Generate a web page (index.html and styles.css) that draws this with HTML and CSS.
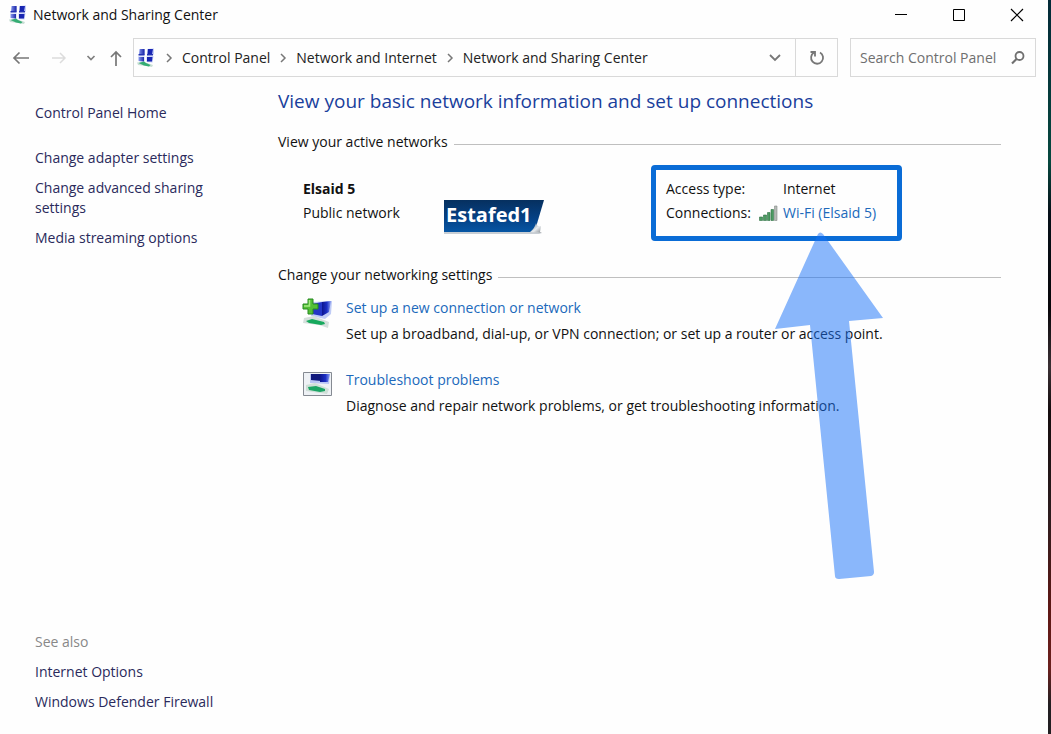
FILE: index.html
```
<!DOCTYPE html>
<html lang="en">
<head>
<meta charset="utf-8">
<title>Network and Sharing Center</title>
<link rel="stylesheet" href="styles.css">
</head>
<body>
<svg class="defs" aria-hidden="true">
  <defs>
    <linearGradient id="screen" x1="0" y1="0" x2="1" y2="0">
      <stop offset="0" stop-color="#0c1590"/><stop offset=".55" stop-color="#1c2fc4"/><stop offset="1" stop-color="#8ea2f2"/>
    </linearGradient>
    <linearGradient id="pane" x1="0" y1="0" x2="1" y2="0">
      <stop offset="0" stop-color="#8090e8"/><stop offset=".4" stop-color="#1420a4"/><stop offset="1" stop-color="#1a28b8"/>
    </linearGradient>
    <symbol id="network" viewBox="0 0 20 20">
      <path d="M3 1h6v6l-6 .5zM11 1l7-.5v6l-7 1zM2 8.500h6.500V14L2 13zM10.500 8.500l7-.5-1 6.500-6-.5z" fill="#c4cdf6"/>
      <path d="M4 1h4.500v5.500H3zM12 1h5l-1 5.500h-4.500z" fill="url(#pane)"/>
      <path d="M3 9h5v4.500l-5-.5zM11 9h5.500l-.5 4.500h-5z" fill="url(#pane)"/>
      <path d="M2.500 6h6v1.500h-6zM11 6h6v1.500h-6z" fill="#2332b4"/>
      <path d="M1 14.500l7-.5 9 3-1 2-6-1-8-1z" fill="#c9ded5"/>
      <path d="M2.500 15l5.500-1.500 2 1.500 4.500 2-1.500 1.500-5-1z" fill="#35ad74"/>
    </symbol>
    <symbol id="chevron-right" viewBox="0 0 8 10">
      <path d="M2 1l4 4-4 4" fill="none" stroke="#777" stroke-width="1.500"/>
    </symbol>
  </defs>
</svg>
<div class="desktop">
  <div class="window">
    <header class="titlebar">
      <svg class="app-icon"><use href="#network"/></svg>
      <span class="title">Network and Sharing Center</span>
      <div class="captions">
        <button class="caption" aria-label="Minimize"><svg viewBox="0 0 14 14"><path d="M1 6.500h12" stroke="#000"/></svg></button>
        <button class="caption" aria-label="Maximize"><svg viewBox="0 0 14 14"><path d="M1.500 1.500h11v11h-11z" fill="none" stroke="#000"/></svg></button>
        <button class="caption" aria-label="Close"><svg viewBox="0 0 14 14"><path d="M1 1l12 12M13 1L1 13" stroke="#000" stroke-width="1.200"/></svg></button>
      </div>
    </header>

    <nav class="toolbar" aria-label="Navigation">
      <div class="history">
        <button class="tool wide" aria-label="Back"><svg width="18" height="14" viewBox="0 0 18 14"><path d="M17 7H2M7.500 1.500L2 7l5.500 5.500" fill="none" stroke="#777" stroke-width="1.700"/></svg></button>
        <button class="tool wide" aria-label="Forward"><svg width="16" height="14" viewBox="0 0 16 14"><path d="M1 7h13M9 2l5 5-5 5" fill="none" stroke="#dcdcdc" stroke-width="1.500"/></svg></button>
        <button class="tool" aria-label="Recent locations"><svg width="10" height="8" viewBox="0 0 10 8"><path d="M1.500 2L5 5.500 8.500 2" fill="none" stroke="#808080" stroke-width="1.700"/></svg></button>
        <button class="tool" aria-label="Up"><svg width="14" height="16" viewBox="0 0 14 16"><path d="M7 16V2M2 7l5-5 5 5" fill="none" stroke="#777" stroke-width="1.700"/></svg></button>
      </div>
      <div class="address">
        <svg class="app-icon"><use href="#network"/></svg>
        <svg class="sep"><use href="#chevron-right"/></svg>
        <a class="crumb" href="#">Control Panel</a>
        <svg class="sep"><use href="#chevron-right"/></svg>
        <a class="crumb" href="#">Network and Internet</a>
        <svg class="sep"><use href="#chevron-right"/></svg>
        <a class="crumb" href="#">Network and Sharing Center</a>
        <button class="tool drop" aria-label="Previous locations"><svg width="14" height="10" viewBox="0 0 14 10"><path d="M2 2l5 5 5-5" fill="none" stroke="#777" stroke-width="1.800"/></svg></button>
        <button class="tool refresh" aria-label="Refresh"><svg width="16" height="16" viewBox="0 0 16 16"><path d="M11 2.500A6 6 0 1 1 5 2.600M1.500 2h4.500v4.500" fill="none" stroke="#777" stroke-width="1.800"/></svg></button>
      </div>
      <form class="search">
        <input class="search-input" type="text" placeholder="Search Control Panel" aria-label="Search Control Panel">
        <button class="tool" type="button" aria-label="Search"><svg width="16" height="16" viewBox="0 0 16 16"><circle cx="9.500" cy="6" r="4" fill="none" stroke="#707070" stroke-width="1.800"/><path d="M6.500 9L2 13.500" stroke="#707070" stroke-width="2.200"/></svg></button>
      </form>
    </nav>

    <div class="content">
      <aside class="sidebar">
        <a class="side-link home" href="#">Control Panel Home</a>
        <a class="side-link" href="#">Change adapter settings</a>
        <a class="side-link" href="#">Change advanced sharing settings</a>
        <a class="side-link" href="#">Media streaming options</a>
        <div class="see-also">
          <span class="muted">See also</span>
          <a class="side-link" href="#">Internet Options</a>
          <a class="side-link" href="#">Windows Defender Firewall</a>
        </div>
      </aside>

      <main class="main">
        <h1 class="heading">View your basic network information and set up connections</h1>
        <h2 class="section">View your active networks</h2>
        <div class="network">
          <div class="network-name">
            <strong>Elsaid 5</strong>
            <span>Public network</span>
          </div>
          <svg class="brand" viewBox="0 0 100 34" role="img" aria-label="Estafed1">
            <defs>
              <linearGradient id="brandfill" x1="0" y1="0" x2="0" y2="1"><stop offset="0" stop-color="#06305f"/><stop offset=".6" stop-color="#054287"/><stop offset="1" stop-color="#0656a4"/></linearGradient>
              <linearGradient id="curl" x1="0" y1="0" x2="1" y2="1"><stop offset="0" stop-color="#5f6e7e"/><stop offset=".55" stop-color="#e8ecef"/><stop offset="1" stop-color="#7b8187"/></linearGradient>
            </defs>
            <path d="M0 32h92l6 2H0z" fill="#c8ced4"/>
            <path d="M0 0h100L92 27l-5 5H0z" fill="url(#brandfill)"/>
            <path d="M86 32q5-4 6-9 1 4 5 3l-1 6 2 1z" fill="url(#curl)"/>
            <text x="2" y="22" class="brand-text">Estafed1</text>
          </svg>
          <div class="callout">
            <dl class="details">
              <dt>Access type:</dt>
              <dd>Internet</dd>
              <dt>Connections:</dt>
              <dd class="wifi">
                <svg class="signal" viewBox="0 0 19 17"><g fill="#4c9b62" stroke="#2f7145" stroke-width=".6"><path d="M.5 12h3v3.500h-3zM4.500 10h3v5.500h-3zM8.500 7.500h2.500v8H8.500zM12 4.500h2.500v11H12z"/></g><path d="M15.500 1h2.500v14.500h-2.500z" fill="#b5bab6" stroke="#858b87" stroke-width=".6"/></svg>
                <a class="link" href="#">Wi-Fi (Elsaid 5)</a>
              </dd>
            </dl>
            <svg class="arrow" viewBox="0 0 110 350" aria-hidden="true"><path d="M44 3Q46 0 49 3L109 87L75 90L100 341Q100 344 97 345L65 348Q61 348 61 345L36 94L1 98Z" fill="#1670f8" fill-opacity=".5"/></svg>
          </div>
        </div>

        <h2 class="section">Change your networking settings</h2>
        <div class="tasks">
          <div class="task">
            <svg class="task-icon" viewBox="0 0 32 32">
              <path d="M11 4l19-1-1 13-6 5-14-3z" fill="#c0ccf6"/>
              <path d="M10 6l10-2v14l-10-2z" fill="#2336c7"/><path d="M20 4l9-1-2 11-7 4z" fill="url(#screen)"/>
              <path d="M2 20l10-2 15 6-1 6-9-3-16-2z" fill="#d5dfdc"/>
              <path d="M4 23l6-2 12 3 1 2-4 1-12-2z" fill="#17a95d"/>
              <path d="M6 1h5v5h5v5h-5v5H6v-5H1V6h5z" fill="#53bf36" stroke="#268a20"/>
              <path d="M7.500 2v6H2" fill="none" stroke="#a4ea83" stroke-width="1.500"/>
            </svg>
            <div class="task-text">
              <a class="link" href="#">Set up a new connection or network</a>
              <p>Set up a broadband, dial-up, or VPN connection; or set up a router or access point.</p>
            </div>
          </div>
          <div class="task">
            <svg class="task-icon" viewBox="0 0 32 32">
              <path d="M1.500 2.500h28v23h-28z" fill="#eef1f5" stroke="#858a92"/>
              <path d="M8 4l20 0-1 10-19-1z" fill="#b9c6f5"/>
              <path d="M9 4l11 0-1 7-10-1z" fill="#10197c"/><path d="M18 4l10 0-2 8-8 0z" fill="url(#screen)"/>
              <path d="M4 15l9-2 14 6-2 5-21-3z" fill="#cfdfd7"/>
              <path d="M6 17l8-1 9 3 0 2-5 1-11-2z" fill="#1ba565"/>
            </svg>
            <div class="task-text">
              <a class="link" href="#">Troubleshoot problems</a>
              <p>Diagnose and repair network problems, or get troubleshooting information.</p>
            </div>
          </div>
        </div>
      </main>
    </div>
  </div>
</div>
</body>
</html>
```
FILE: styles.css
```
* { box-sizing: border-box; }
body {
  margin: 0;
  font-family: "Open Sans", "Noto Sans", sans-serif;
  font-size: 14px;
  line-height: 20px;
  color: #111;
}
a { color: inherit; text-decoration: none; }
h1, h2, p, dl, dd { margin: 0; }
button { padding: 0; border: 0; background: none; font: inherit; }
.defs { position: absolute; width: 0; height: 0; }

.desktop {
  min-height: 100vh;
  display: flex;
  padding-right: 3px;
  background: linear-gradient(#032a38 0, #07483f 22%, #061019 29%, #08060a 42%, #3a3034 50%, #140c0e 56%, #2c1c1e 70%, #5e1714 83%, #6b201e 91%, #221f22 96%);
}
.window { flex: 1; display: flex; flex-direction: column; background: #fefefe; }

.titlebar { display: flex; align-items: center; height: 30px; padding: 0 2px 0 8px; }
.app-icon { width: 20px; height: 20px; flex: none; }
.title { margin-left: 5px; }
.captions { display: flex; margin-left: auto; }
.caption { width: 58px; height: 28px; display: grid; place-items: center; }
.caption svg { width: 14px; height: 14px; }

.toolbar { display: flex; height: 39px; margin-top: 8px; padding-right: 12px; }
.history { display: flex; width: 133px; padding-left: 2px; }
.tool { width: 25px; display: grid; place-items: center; flex: none; }
.wide { width: 38px; }
.address { flex: 1; display: flex; align-items: center; border: 1px solid #d9d9d9; padding-left: 2px; color: #222; }
.sep { width: 8px; height: 10px; margin: 0 9px; flex: none; }
.address .tool { height: 100%; }
.drop { width: 40px; margin-left: auto; }
.address .refresh { width: 42px; border-left: 1px solid #d9d9d9; }
.search { display: flex; width: 186px; margin-left: 12px; border: 1px solid #d9d9d9; padding: 0 5px 0 9px; }
.search-input { flex: 1; min-width: 0; padding: 0; border: 0; background: none; font: inherit; outline: 0; }
.search-input::placeholder { color: #6f6f6f; opacity: 1; }

.content { flex: 1; display: flex; padding-top: 10px; }
.sidebar { width: 278px; padding: 16px 60px 22px 35px; display: flex; flex-direction: column; gap: 10px; color: #2a2a5c; }
.home { margin-bottom: 15px; }
.see-also { margin-top: auto; display: flex; flex-direction: column; gap: 10px; }
.muted { color: #888; }

.main { flex: 1; padding-right: 47px; }
.heading { font-size: 19px; line-height: 28px; font-weight: 400; color: #1a3f9c; }
.section { display: flex; align-items: center; gap: 6px; margin-top: 17px; font-size: 14px; font-weight: 400; }
.section::after { content: ""; flex: 1; height: 1px; margin-top: 4px; background: #bfbfbf; }
.network { display: grid; grid-template-columns: 141px 207px auto; justify-content: start; padding: 13px 0 7px 25px; }
.network-name { display: flex; flex-direction: column; padding-top: 12px; line-height: 24px; }
.brand { width: 100px; height: 34px; margin-top: 35px; }
.brand-text { font: 700 20px "Open Sans", sans-serif; fill: #fff; }
.callout { position: relative; border: 5px solid #0a6cd6; border-radius: 4px; padding: 7px 21px 11px 10px; }
.details { display: grid; grid-template-columns: 93px auto; line-height: 24px; }
.details dd { padding-left: 24px; white-space: nowrap; }
.details .wifi { display: flex; align-items: center; gap: 5px; padding-left: 0; }
.signal { width: 19px; height: 17px; }
.arrow { position: absolute; left: 118px; top: 61px; width: 110px; height: 350px; pointer-events: none; }
.link { color: #2069bb; }

.tasks { display: flex; flex-direction: column; gap: 26px; padding: 13px 0 0 24px; }
.task { display: flex; gap: 12px; }
.task-icon { width: 32px; height: 32px; flex: none; }
.task-text p { margin-top: 6px; }
```
